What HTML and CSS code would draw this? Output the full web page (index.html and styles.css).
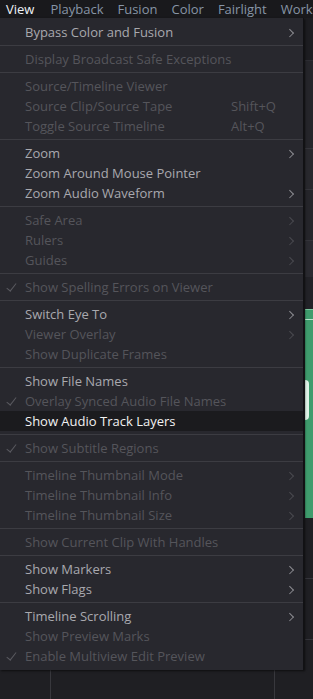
FILE: index.html
```html
<!DOCTYPE html>
<html>
<head>
<meta charset="utf-8">
<link rel="stylesheet" href="styles.css">
</head>
<body>
<div class="menubar">
  <span class="mb-item active">View</span>
  <span class="mb-item">Playback</span>
  <span class="mb-item">Fusion</span>
  <span class="mb-item">Color</span>
  <span class="mb-item">Fairlight</span>
  <span class="mb-item">Workspace</span>
</div>
<div class="app">
  <div class="app-main">
    <div class="bottom-cols">
      <div class="col c1"></div>
      <div class="col c2"></div>
      <div class="col c3"></div>
    </div>
  </div>
  <div class="strip">
    <div class="band b1"></div>
    <div class="band b2"></div>
    <div class="band b3"></div>
    <div class="band b4"></div>
    <div class="band b5"></div>
    <div class="band b6"></div>
    <div class="band green"><div class="wave"></div></div>
    <div class="band b7"></div>
    <div class="band b8"></div>
    <div class="band b9"></div>
  </div>
</div>

<div class="menu">
  <div class="item"><span class="label">Bypass Color and Fusion</span><span class="arrow"></span></div>
  <div class="sep"></div>
  <div class="item dis"><span class="label">Display Broadcast Safe Exceptions</span></div>
  <div class="sep"></div>
  <div class="item dis"><span class="label">Source/Timeline Viewer</span></div>
  <div class="item dis"><span class="label">Source Clip/Source Tape</span><span class="key">Shift+Q</span></div>
  <div class="item dis"><span class="label">Toggle Source Timeline</span><span class="key">Alt+Q</span></div>
  <div class="sep"></div>
  <div class="item"><span class="label">Zoom</span><span class="arrow"></span></div>
  <div class="item"><span class="label">Zoom Around Mouse Pointer</span></div>
  <div class="item"><span class="label">Zoom Audio Waveform</span><span class="arrow"></span></div>
  <div class="sep"></div>
  <div class="item dis"><span class="label">Safe Area</span><span class="arrow"></span></div>
  <div class="item dis"><span class="label">Rulers</span><span class="arrow"></span></div>
  <div class="item dis"><span class="label">Guides</span><span class="arrow"></span></div>
  <div class="sep"></div>
  <div class="item dis checked"><span class="label">Show Spelling Errors on Viewer</span></div>
  <div class="sep"></div>
  <div class="item"><span class="label">Switch Eye To</span><span class="arrow"></span></div>
  <div class="item dis"><span class="label">Viewer Overlay</span><span class="arrow"></span></div>
  <div class="item dis"><span class="label">Show Duplicate Frames</span></div>
  <div class="sep"></div>
  <div class="item"><span class="label">Show File Names</span></div>
  <div class="item dis checked"><span class="label">Overlay Synced Audio File Names</span></div>
  <div class="item hover"><span class="label">Show Audio Track Layers</span></div>
  <div class="sep"></div>
  <div class="item dis checked"><span class="label">Show Subtitle Regions</span></div>
  <div class="sep"></div>
  <div class="item dis"><span class="label">Timeline Thumbnail Mode</span><span class="arrow"></span></div>
  <div class="item dis"><span class="label">Timeline Thumbnail Info</span><span class="arrow"></span></div>
  <div class="item dis"><span class="label">Timeline Thumbnail Size</span><span class="arrow"></span></div>
  <div class="sep"></div>
  <div class="item dis"><span class="label">Show Current Clip With Handles</span></div>
  <div class="sep"></div>
  <div class="item"><span class="label">Show Markers</span><span class="arrow"></span></div>
  <div class="item"><span class="label">Show Flags</span><span class="arrow"></span></div>
  <div class="sep"></div>
  <div class="item"><span class="label">Timeline Scrolling</span><span class="arrow"></span></div>
  <div class="item dis"><span class="label">Show Preview Marks</span></div>
  <div class="item dis checked"><span class="label">Enable Multiview Edit Preview</span></div>
</div>
</body>
</html>
```
FILE: styles.css
```css
html, body {
  margin: 0;
  padding: 0;
  height: 100%;
  overflow: hidden;
}
body {
  background: #1f1f23;
  font-family: "Open Sans", "Noto Sans", sans-serif;
  font-size: 13px;
  position: relative;
}
.menubar {
  height: 18px;
  background: #19191c;
  display: flex;
  gap: 14px;
  padding-left: 6px;
  white-space: nowrap;
  overflow: hidden;
  line-height: 18px;
}
.mb-item {
  color: #8795a6;
}
.mb-item.active {
  color: #eef2f6;
  margin-right: 2px;
}
.app {
  display: flex;
  height: 681px;
}
.app-main {
  flex: 1;
  display: flex;
  flex-direction: column;
  justify-content: flex-end;
}
.bottom-cols {
  height: 40px;
  display: flex;
}
.col { height: 100%; }
.c1 { width: 50px; border-right: 1px solid #38383d; }
.c2 { width: 223px; border-right: 1px solid #38383d; }
.c3 { flex: 1; }
.strip {
  width: 8px;
  display: flex;
  flex-direction: column;
}
.band { flex: none; overflow: hidden; }
.b1 { height: 42px; background: #1d1d21; border-bottom: 1px solid #2d2d33; }
.b2 { height: 87px; background: #25252a; border-bottom: 1px solid #34343a; }
.b3 { height: 40px; background: #28282d; border-bottom: 1px solid #34343a; }
.b4 { height: 50px; background: #25252a; border-bottom: 1px solid #34343a; }
.b5 { height: 36px; background: #2a2a30; }
.b6 { height: 32px; background: #222227; }
.green {
  height: 208px;
  background: #3f9c6d;
  border-top: 1px solid #7ac79e;
  position: relative;
}
.green::before {
  content: "";
  position: absolute;
  left: 0; right: 0; top: 9px;
  height: 1px;
  background: #b7e3cb;
}
.wave {
  position: absolute;
  left: 0; top: 70px;
  width: 4px; height: 40px;
  background: #dff3e8;
  border-radius: 0 4px 4px 0;
}
.b7 { height: 60px; background: #1f1f23; border-bottom: 1px solid #34343a; }
.b8 { height: 60px; background: #1f1f23; border-bottom: 1px solid #34343a; }
.b9 { flex: 1; background: #1f1f23; }

.menu {
  position: absolute;
  top: 18px;
  left: 0;
  width: 304px;
  box-sizing: border-box;
  padding: 4px 0 4px;
  background: #28282e;
  border-right: 1px solid #111114;
  box-shadow: 1px 1px 2px rgba(0,0,0,0.6);
}
.item {
  height: 20px;
  line-height: 20px;
  padding-left: 25px;
  position: relative;
  color: #a9a9ae;
  white-space: nowrap;
}
.item.dis { color: #55555b; }
.item.hover { background: #1b1b1e; color: #f2f2f2; }
.item.checked::before {
  content: "";
  position: absolute;
  left: 9px;
  top: 4px;
  width: 3.5px;
  height: 9px;
  border-right: 1.4px solid #5a5a60;
  border-bottom: 1.4px solid #5a5a60;
  transform: rotate(38deg);
}
.key {
  position: absolute;
  left: 231px;
  top: 0;
}
.arrow {
  position: absolute;
  left: 289px;
  top: 7px;
  width: 5px;
  height: 7px;
}
.arrow::before {
  content: "";
  position: absolute;
  left: -2px;
  top: 1px;
  width: 4.5px;
  height: 4.5px;
  border-right: 1.4px solid #8c8c92;
  border-top: 1.4px solid #8c8c92;
  transform: rotate(45deg);
}
.item.dis .arrow::before { border-color: #4a4a50; }
.sep {
  height: 1px;
  background: #3c3c42;
  margin: 3px 0;
}
```
